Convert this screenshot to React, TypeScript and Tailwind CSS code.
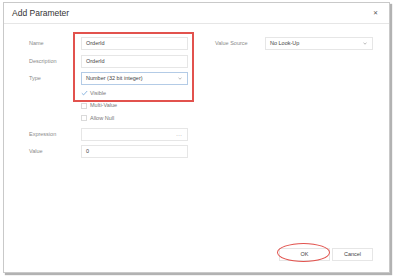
import React from 'react';

const font = { fontFamily: '"Liberation Sans", Arial, sans-serif' };

function Field({ label, children }: { label: string; children: React.ReactNode }) {
    return (
        <div className="flex items-center">
            <div className="w-[52px] text-[5.5px] text-[#8a8a8a]">{label}</div>
            {children}
        </div>
    );
}

function TextBox({ value, suffix, blue }: { value?: string; suffix?: React.ReactNode; blue?: boolean }) {
    return (
        <div
            className={`w-[107px] h-[13px] border ${blue ? 'border-[#b3cbe6]' : 'border-[#e6e6e6]'} bg-white flex items-center justify-between pl-[4px] pr-[5px] text-[5.5px] text-[#444]`}
        >
            <span>{value}</span>
            {suffix}
        </div>
    );
}

function Check({ label, checked }: { label: string; checked?: boolean }) {
    return (
        <div className="flex items-center h-[10px] pl-[52px]">
            {checked ? (
                <svg width="7" height="6" viewBox="0 0 7 6" className="mr-[2px]">
                    <path d="M0.8 3.2 L2.6 4.9 L6.2 1" fill="none" stroke="#6fa3d8" strokeWidth="0.8" />
                </svg>
            ) : (
                <div className="w-[6px] h-[6px] border border-[#dadada] mr-[3px]" />
            )}
            <span className="text-[5.5px] text-[#777]">{label}</span>
        </div>
    );
}

function Chevron() {
    return (
        <svg width="4" height="3" viewBox="0 0 4 3">
            <path d="M0.5 0.8 L2 2.2 L3.5 0.8" fill="none" stroke="#888" strokeWidth="0.6" />
        </svg>
    );
}

export default function App() {
    return (
        <div className="w-[396px] h-[280px] bg-white pl-[3px] pt-[2px]" style={font}>
            <div className="relative w-[387px] h-[271px] bg-white border border-[#c9c9c9] shadow-[2px_2px_1px_rgba(0,0,0,0.3)] flex flex-col">
                <div className="h-[21px] shrink-0 border-b border-[#e6e6e6] flex items-center justify-between pl-[8px] pr-[11px]">
                    <span className="text-[8.5px] text-[#333]">Add Parameter</span>
                    <span className="text-[6px] text-[#555] leading-none">✕</span>
                </div>

                <div className="flex pt-[13px] pl-[25px]">
                    <div className="flex flex-col">
                        <div className="flex flex-col gap-[4.5px]">
                            <Field label="Name">
                                <TextBox value="OrderId" />
                            </Field>
                            <Field label="Description">
                                <TextBox value="OrderId" />
                            </Field>
                            <Field label="Type">
                                <TextBox value="Number (32 bit integer)" suffix={<Chevron />} blue />
                            </Field>
                        </div>
                        <div className="flex flex-col gap-[2.5px] mt-[3px]">
                            <Check label="Visible" checked />
                            <Check label="Multi-Value" />
                            <Check label="Allow Null" />
                        </div>
                        <div className="flex flex-col gap-[4px] mt-[5px]">
                            <Field label="Expression">
                                <TextBox suffix={<span className="text-[6px] text-[#888] leading-none">···</span>} />
                            </Field>
                            <Field label="Value">
                                <TextBox value="0" />
                            </Field>
                        </div>
                    </div>

                    <div className="flex items-center h-[13px] ml-[27px]">
                        <div className="w-[50px] text-[5.5px] text-[#8a8a8a]">Value Source</div>
                        <div className="w-[108px] h-[13px] border border-[#e6e6e6] flex items-center justify-between pl-[4px] pr-[5px] text-[5.5px] text-[#444]">
                            <span>No Look-Up</span>
                            <Chevron />
                        </div>
                    </div>
                </div>

                <div className="mt-auto flex justify-end gap-[2px] pr-[16px] pb-[11px]">
                    <div className="w-[51px] h-[13px] border border-[#e6e6e6] flex items-center justify-center text-[5.5px] text-[#444]">
                        OK
                    </div>
                    <div className="w-[41px] h-[13px] border border-[#e6e6e6] flex items-center justify-center text-[5.5px] text-[#444]">
                        Cancel
                    </div>
                </div>

                <div className="absolute left-[69px] top-[29px] w-[121px] h-[70px] border-2 border-[#e2524d] pointer-events-none" />
                <div className="absolute left-[273px] top-[240px] w-[53px] h-[19px] border-[1.5px] border-[#e2524d] rounded-[50%] pointer-events-none" />
            </div>
        </div>
    );
}
